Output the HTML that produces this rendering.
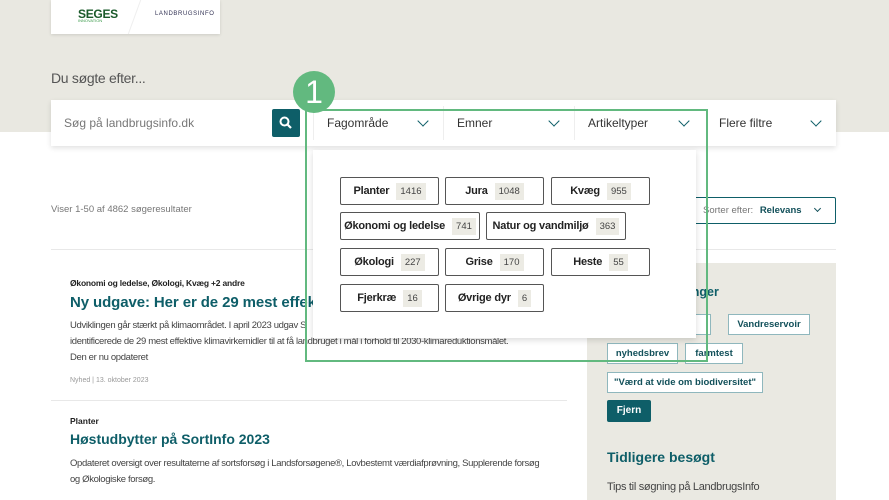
<!DOCTYPE html>
<html><head><meta charset="utf-8"><style>
*{box-sizing:border-box;margin:0;padding:0}
body{width:889px;height:500px;overflow:hidden;background:#fff;font-family:"Liberation Sans",sans-serif;position:relative;color:#222}
.a{position:absolute;white-space:nowrap}
.top{left:0;top:0;width:889px;height:132px;background:#e9e8e1}
.logo{left:51px;top:0;width:169px;height:34px;background:#fff;box-shadow:0 1px 3px rgba(0,0,0,.12)}
.search{left:51px;top:100px;width:785px;height:46px;background:#fff;box-shadow:0 2px 5px rgba(0,0,0,.12)}
.t{font-size:12px;color:#333}
.chip{position:absolute;height:28px;border:1.3px solid #555;border-radius:2px;background:#fff;font-weight:bold;font-size:11px;display:flex;align-items:center;justify-content:center;gap:7px;color:#222;white-space:nowrap;letter-spacing:-.2px}
.chip span{background:#ecebe4;font-weight:normal;font-size:9.5px;padding:3px 4px;color:#444;letter-spacing:0}
.tag{position:absolute;height:21px;border:1.5px solid #8fb7bd;background:#fff;font-size:9.5px;font-weight:bold;color:#12505a;display:flex;align-items:center;justify-content:center;white-space:nowrap}
.chev{position:absolute;width:8px;height:8px;border-right:1.6px solid #0e5e68;border-bottom:1.6px solid #0e5e68;transform:rotate(45deg)}
</style></head><body>
<div class="a top"></div>
<div class="a logo">
 <div class="a" style="left:27px;top:7px;font-weight:bold;font-size:12px;color:#1a5a2a;letter-spacing:-.3px">SEGES</div>
 <div class="a" style="left:27px;top:18px;font-size:4px;color:#3a9a4a">INNOVATION</div>
 <div class="a" style="left:83px;top:0;width:1px;height:34px;background:#eee;transform:skewX(-20deg)"></div>
 <div class="a" style="left:104px;top:11px;font-size:6px;color:#335;letter-spacing:.6px">LANDBRUGSINFO</div>
</div>
<div class="a" style="left:51px;top:70px;font-size:14px;color:#555;letter-spacing:-.3px">Du søgte efter...</div>
<div class="a search">
 <div class="a" style="left:13px;top:16px;font-size:12px;color:#777">Søg på landbrugsinfo.dk</div>
 <div class="a" style="left:221px;top:9px;width:28px;height:28px;background:#0e5e68;border-radius:2px">
  <svg width="28" height="28"><circle cx="12.5" cy="12.5" r="4" fill="none" stroke="#fff" stroke-width="2"/><line x1="15.5" y1="15.5" x2="19" y2="19" stroke="#fff" stroke-width="2.2"/></svg></div>
 <div class="a" style="left:262px;top:6px;width:1px;height:34px;background:#eee"></div>
 <div class="a t" style="left:276px;top:16px">Fagområde</div><div class="chev" style="left:368px;top:17px"></div>
 <div class="a" style="left:392px;top:6px;width:1px;height:34px;background:#eee"></div>
 <div class="a t" style="left:406px;top:16px">Emner</div><div class="chev" style="left:499px;top:17px"></div>
 <div class="a" style="left:523px;top:6px;width:1px;height:34px;background:#eee"></div>
 <div class="a t" style="left:537px;top:16px">Artikeltyper</div><div class="chev" style="left:629px;top:17px"></div>
 <div class="a t" style="left:668px;top:16px">Flere filtre</div><div class="chev" style="left:761px;top:17px"></div>
</div>
<div class="a" style="left:51px;top:204px;font-size:9.5px;color:#777">Viser 1-50 af 4862 søgeresultater</div>
<div class="a" style="left:694px;top:197px;width:142px;height:27px;border:1.5px solid #0e5e68;border-radius:2px;background:#fff">
 <div class="a" style="left:8px;top:7px;font-size:9.5px;color:#777">Sorter efter: <b style="color:#12505a;margin-left:4px">Relevans</b></div>
 <div class="a" style="left:120px;top:8px;width:5px;height:5px;border-right:1.3px solid #12505a;border-bottom:1.3px solid #12505a;transform:rotate(45deg)"></div>
</div>
<div class="a" style="left:51px;top:249px;width:785px;height:1px;background:#e8e8e8"></div>
<div class="a" style="left:70px;top:278px;font-size:8.5px;font-weight:bold;letter-spacing:-.2px">Økonomi og ledelse, Økologi, Kvæg +2 andre</div>
<div class="a" style="left:70px;top:294px;font-size:15px;font-weight:bold;color:#0e5e68;letter-spacing:-.1px">Ny udgave: Her er de 29 mest effektive</div>
<div class="a" style="left:70px;top:318px;font-size:9.5px;color:#444;line-height:16px;letter-spacing:-.35px">Udviklingen går stærkt på klimaområdet. I april 2023 udgav S<br>identificerede de 29 mest effektive klimavirkemidler til at få landbruget i mål i forhold til 2030-klimareduktionsmålet.<br>Den er nu opdateret</div>
<div class="a" style="left:70px;top:377px;font-size:7px;color:#999">Nyhed | 13. oktober 2023</div>
<div class="a" style="left:51px;top:400px;width:516px;height:1px;background:#e8e8e8"></div>
<div class="a" style="left:70px;top:416px;font-size:8.5px;font-weight:bold">Planter</div>
<div class="a" style="left:70px;top:431px;font-size:14px;font-weight:bold;color:#0e5e68">Høstudbytter på SortInfo 2023</div>
<div class="a" style="left:70px;top:456px;font-size:9.5px;color:#444;line-height:16px;letter-spacing:-.35px">Opdateret oversigt over resultaterne af sortsforsøg i Landsforsøgene®, Lovbestemt værdiafprøvning, Supplerende forsøg<br>og Økologiske forsøg.</div>
<div class="a" style="left:587px;top:263px;width:249px;height:237px;background:#eae9e2">
 <div class="a" style="left:20px;top:22px;font-size:12.5px;font-weight:bold;color:#0e5e68">Seneste søgninger</div>
 <div class="tag" style="left:20px;top:51px;width:104px">Klimasøgning</div>
 <div class="tag" style="left:141px;top:51px;width:82px">Vandreservoir</div>
 <div class="tag" style="left:20px;top:80px;width:71px">nyhedsbrev</div>
 <div class="tag" style="left:98px;top:80px;width:58px">farmtest</div>
 <div class="tag" style="left:20px;top:109px;width:156px">"Værd at vide om biodiversitet"</div>
 <div class="a" style="left:20px;top:137px;width:44px;height:22px;background:#0e5e68;border-radius:2px;color:#fff;font-size:10px;font-weight:bold;text-align:center;line-height:22px">Fjern</div>
 <div class="a" style="left:20px;top:186px;font-size:14px;font-weight:bold;color:#0e5e68">Tidligere besøgt</div>
 <div class="a" style="left:20px;top:218px;font-size:11px;color:#444;letter-spacing:-.3px">Tips til søgning på LandbrugsInfo</div>
</div>
<div class="a" style="left:313px;top:150px;width:383px;height:188px;background:#fff;box-shadow:0 2px 6px rgba(0,0,0,.15)"></div>
<div class="chip" style="left:340px;top:177px;width:99px">Planter<span>1416</span></div>
<div class="chip" style="left:445px;top:177px;width:99px">Jura<span>1048</span></div>
<div class="chip" style="left:551px;top:177px;width:99px">Kvæg<span>955</span></div>
<div class="chip" style="left:340px;top:212px;width:140px">Økonomi og ledelse<span>741</span></div>
<div class="chip" style="left:486px;top:212px;width:140px">Natur og vandmiljø<span>363</span></div>
<div class="chip" style="left:340px;top:248px;width:99px">Økologi<span>227</span></div>
<div class="chip" style="left:445px;top:248px;width:99px">Grise<span>170</span></div>
<div class="chip" style="left:551px;top:248px;width:99px">Heste<span>55</span></div>
<div class="chip" style="left:340px;top:284px;width:99px">Fjerkræ<span>16</span></div>
<div class="chip" style="left:445px;top:284px;width:99px">Øvrige dyr<span>6</span></div>
<div class="a" style="left:305px;top:109px;width:403px;height:253px;border:2.5px solid #62b97f"></div>
<div class="a" style="left:293px;top:71px;width:42px;height:42px;border-radius:50%;background:#62b97f;color:#fff;font-size:32px;text-align:center;line-height:42px">1</div>
</body></html>
